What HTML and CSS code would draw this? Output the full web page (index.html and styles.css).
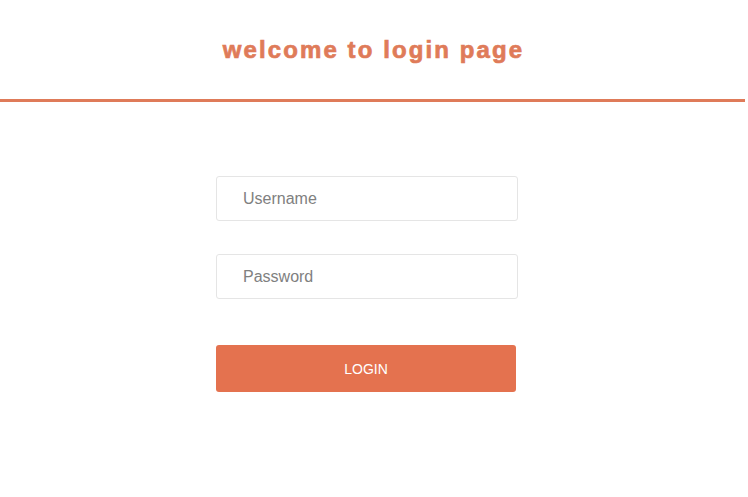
FILE: index.html
```html
<!DOCTYPE html>
<html>
<head>
<meta charset="utf-8">
<link rel="stylesheet" href="styles.css">
</head>
<body>
<header class="top">
  <h1 class="title">welcome to login page</h1>
</header>
<main class="main">
  <form class="form">
    <input class="field" type="text" placeholder="Username">
    <input class="field" type="password" placeholder="Password">
    <button class="btn" type="button">LOGIN</button>
  </form>
</main>
</body>
</html>
```
FILE: styles.css
```css
html, body {
  margin: 0;
  padding: 0;
  background: #ffffff;
  font-family: "Liberation Sans", Arial, sans-serif;
}
.top {
  height: 99px;
  border-bottom: 3px solid #df7b59;
  display: flex;
  align-items: center;
  justify-content: center;
  margin-right: 3px;
}
.title {
  margin: 0;
  padding-top: 1px;
  padding-left: 2px;
  font-size: 24px;
  font-weight: 700;
  letter-spacing: 2.1px;
  color: #df7b59;
  -webkit-text-stroke: 0.7px #df7b59;
}
.main {
  display: flex;
  justify-content: center;
  padding-top: 74px;
  padding-right: 14px;
}
.form {
  width: 302px;
  display: flex;
  flex-direction: column;
}
.field {
  box-sizing: border-box;
  height: 45px;
  width: 302px;
  border: 1px solid #e5e5e5;
  border-radius: 3px;
  padding: 0 0 0 26px;
  font-family: "Liberation Sans", Arial, sans-serif;
  font-size: 16px;
  color: #555;
  outline: none;
  margin-bottom: 33px;
}
.field::placeholder {
  color: #808080;
}
.field + .field {
  margin-bottom: 46px;
}
.btn {
  width: 300px;
  height: 47px;
  border: none;
  border-radius: 3px;
  background: #e4724f;
  color: #ffffff;
  font-family: "Liberation Sans", Arial, sans-serif;
  font-size: 14px;
  padding: 0;
  cursor: pointer;
}
```
